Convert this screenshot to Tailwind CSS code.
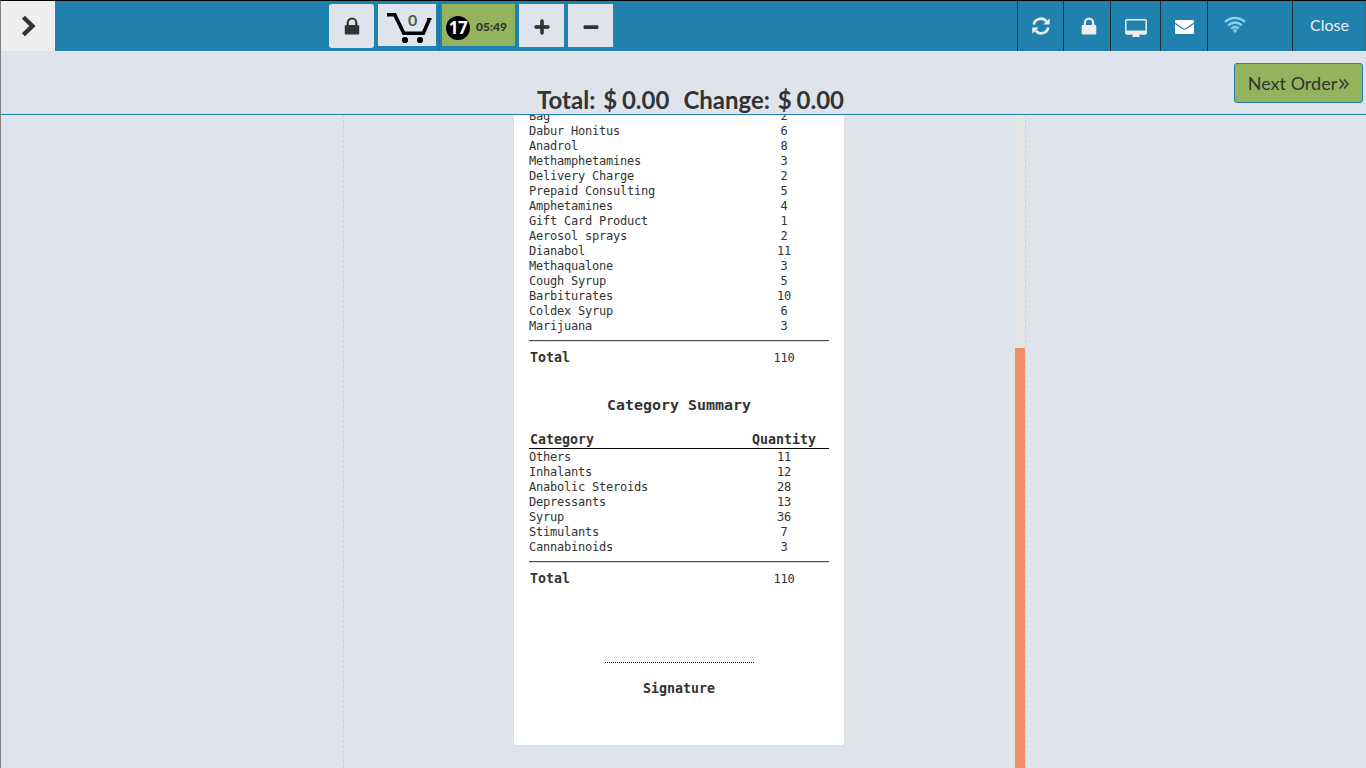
<!DOCTYPE html>
<html lang="en">
<head>
<meta charset="utf-8">
<title>Point of Sale</title>
<script src="https://cdn.jsdelivr.net/npm/@tailwindcss/browser@4"></script>
</head>
<body class="w-[1366px] h-[768px] overflow-hidden bg-[#dfe4ec] font-['Lato',sans-serif] text-[#333]">
<div class="flex flex-col w-full h-full border-t border-t-black border-l border-l-[#808080]">
  <header class="flex shrink-0 h-[50px] bg-[#2080ae]">
    <button class="w-[54px] h-[50px] bg-[#eee] flex items-center justify-center">
      <svg class="w-[16px] h-[24px] ml-[1px]" viewBox="0 0 16 24" fill="none" stroke="#333" stroke-width="4.4"><path d="M2.4 3.2 11.4 12 2.4 20.8"/></svg>
    </button>
    <div class="flex items-start pt-[3px] ml-[274px]">
      <button class="w-[45px] h-[44px] rounded-[3px] bg-[#dfe4ec] flex items-center justify-center">
        <svg class="w-[16px] h-[18px] ml-[1px]" viewBox="0 0 16 18"><path d="M3.7 9V5.8a4.3 4.3 0 0 1 8.6 0V9" fill="none" stroke="#333" stroke-width="2.1"/><rect x=".8" y="8" width="14.4" height="9.6" rx="1" fill="#333"/></svg>
      </button>
      <button class="relative ml-[4px] w-[58px] h-[42px] bg-[#dfe4ec]">
        <svg class="w-[58px] h-[42px]" viewBox="0 0 58 42"><path d="M9 10.7H16.8L25.8 29.3H45.3L51.2 15.8" fill="none" stroke="#000" stroke-width="3.6"/><path d="M49 15H53.5" stroke="#000" stroke-width="2"/><circle cx="27" cy="36" r="3.1"/><circle cx="42" cy="36" r="3.1"/></svg>
        <span class="absolute left-[30px] top-[6px] text-[16px] leading-[20px] font-bold text-[#555]">0</span>
      </button>
      <div class="ml-[3px] -mt-[3px] h-[50px] w-px bg-[#43667d]"></div>
      <button class="ml-[2px] w-[73px] h-[42px] bg-[#93b45c] flex items-center">
        <span class="ml-[4px] mt-[6px] w-[24px] h-[24px] rounded-full bg-black text-white text-[17px] leading-[24px] font-bold font-['Open_Sans',sans-serif] text-center tracking-[-0.5px]">17</span>
        <span class="ml-[6px] mt-[4px] text-[12px] font-black">05:49</span>
      </button>
      <button class="ml-[4px] w-[45px] h-[43px] bg-[#dfe4ec] flex items-center justify-center">
        <svg class="w-[16px] h-[16px] mt-[2px] ml-[1px]" viewBox="0 0 16 16"><path d="M8 1.6V14.4M1.6 8H14.4" stroke="#333" stroke-width="3.4" stroke-linejoin="round"/><path d="M8 1.6V14.4M1.6 8H14.4" stroke="#333" stroke-width="2.8" stroke-linecap="round"/></svg>
      </button>
      <button class="ml-[4px] w-[45px] h-[43px] bg-[#dfe4ec] flex items-center justify-center">
        <svg class="w-[16px] h-[16px] mt-[2px] ml-[1px]" viewBox="0 0 16 16"><rect x=".6" y="6.2" width="14.8" height="3.8" rx="1" fill="#333"/></svg>
      </button>
    </div>
    <nav class="ml-auto flex text-[#eee]">
      <a class="w-[46px] border-l border-[#262e38] flex items-center justify-center">
        <svg class="w-[18px] h-[18px]" viewBox="0 0 18 18"><path d="M1.8 7.4A7 7 0 0 1 14.2 4.4M16.2 10.6A7 7 0 0 1 3.8 13.6" fill="none" stroke="#eee" stroke-width="2.6"/><path d="M17.7 1.2V7.6H11.3ZM.3 16.8V10.4H6.7Z" fill="#eee"/></svg>
      </a>
      <a class="w-[47px] border-l border-[#262e38] flex items-center justify-center">
        <svg class="w-[16px] h-[18px] ml-[4px]" viewBox="0 0 16 18"><path d="M3.9 9V5.8a4.1 4.1 0 0 1 8.2 0V9" fill="none" stroke="#eee" stroke-width="2.2"/><rect x=".7" y="8" width="14.6" height="9.6" rx="1" fill="#eee"/></svg>
      </a>
      <a class="w-[50px] border-l border-[#262e38] flex items-center justify-center">
        <svg class="w-[22px] h-[20px] mt-[4px]" viewBox="0 0 22 20"><rect x=".8" y="1.7" width="20.4" height="14.3" rx="1" fill="none" stroke="#eee" stroke-width="1.5"/><path d="M.8 12.4H21.2V16H.8ZM8 15H14V18H15V19H7V18H8Z" fill="#eee"/></svg>
      </a>
      <a class="w-[47px] border-l border-[#262e38] flex items-center justify-center">
        <svg class="w-[19px] h-[14px] mt-[2px]" viewBox="0 0 19 14"><rect width="19" height="14" rx="1" fill="#fff"/><path d="M0 3.2 7.6 8.6Q9.5 9.9 11.4 8.6L19 3.2" fill="none" stroke="#2080ae" stroke-width="1.2"/></svg>
      </a>
      <a class="w-[85px] border-l border-[#262e38]">
        <svg class="w-[22px] h-[17px] ml-[16px] mt-[15px]" viewBox="0 0 22 17" fill="none" stroke="#87ceeb" stroke-width="2.6"><path d="M1 6A14.5 14.5 0 0 1 21 6M4.2 9.4A9.8 9.8 0 0 1 17.8 9.4M7.4 12.6A5.2 5.2 0 0 1 14.6 12.6"/><path d="M11 12.8 13.2 14.8 11 17 8.8 14.8Z" fill="#87ceeb" stroke="none"/></svg>
      </a>
      <a class="w-[74px] border-l border-r border-l-[#262e38] border-r-[#43667d] pl-[1px] text-center text-[16px] leading-[48px] text-[#eee]">Close</a>
    </nav>
  </header>
  <section class="relative shrink-0 h-[64px] border-b border-[#2080ae]">
    <div class="flex gap-[15px] pl-[536px] pt-[34px] text-[24px] leading-[30px] font-bold whitespace-nowrap"><span>Total:<span class="pl-[2px]"> $</span><span class="-ml-[1px]"> 0.00</span></span><span class="-ml-px">Change:<span class="pl-[2px]"> $</span><span class="-ml-[1px]"> 0.00</span></span></div>
    <button class="absolute right-[3px] top-[12px] w-[129px] h-[40px] rounded-[3px] border border-[#2080ae] bg-[#93b45c] text-[18px] flex items-center justify-center whitespace-nowrap">Next Order
      <svg class="ml-[2px] mt-px w-[10px] h-[10px]" viewBox="0 0 10 10" fill="none" stroke="#333" stroke-width="1.5"><path d="M.7.6 4.7 5 .7 9.4M5 .6 9 5 5 9.4"/></svg>
    </button>
  </section>
  <main class="flex flex-1 min-h-0 overflow-hidden">
    <div class="w-[343px] border-r border-dashed border-[#cfd3d8]"></div>
    <div class="flex-1 flex justify-end">
      <div class="mr-[170px] w-[332px] h-[638px] -mt-[7px] px-[15px] bg-white border border-t-0 border-[#ddd] rounded-[3px] font-['DejaVu_Sans_Mono',monospace] text-[12px] tracking-[-0.224px] leading-[15px]">
        <div id="products" class="pt-px"></div>
        <div class="mt-[6px] h-px bg-[#4d4d4d]"></div>
        <div class="h-px bg-[#ddd]"></div>
        <div class="mt-[8px] flex"><b class="flex-1 pl-px text-[13.29px] tracking-normal">Total</b><span class="w-[90px] pt-px -mb-px text-center">110</span></div>
        <h2 class="mt-[33px] text-center text-[14.95px] font-bold tracking-normal">Category Summary</h2>
        <div class="mt-[19px] flex h-[17px] text-[13.29px] font-bold tracking-normal border-b border-black"><span class="flex-1 pl-px">Category</span><span class="w-[90px] text-center">Quantity</span></div>
        <div id="categories" class="pt-px"></div>
        <div class="mt-[6px] h-px bg-[#4d4d4d]"></div>
        <div class="h-px bg-[#ddd]"></div>
        <div class="mt-[8px] flex"><b class="flex-1 pl-px text-[13.29px] tracking-normal">Total</b><span class="w-[90px] pt-px -mb-px text-center">110</span></div>
        <div class="mt-[76px] mx-auto w-[149px] h-px bg-[repeating-linear-gradient(90deg,#000_0_1px,#fff_1px_2px)]"></div>
        <div class="mt-[18px] text-center text-[13.29px] font-bold tracking-normal">Signature</div>
      </div>
      <div class="w-[10px] bg-[#e6e6e6] pt-[233px]"><div class="h-full bg-[#f08e66]"></div></div>
    </div>
    <div class="w-[341px] border-l border-dashed border-[#cfd3d8]"></div>
  </main>
</div>
<script>
const fill = (id, rows) => {
  document.getElementById(id).innerHTML = rows.map(([n, q]) =>
    `<div class="flex h-[15px]"><span class="flex-1">${n}</span><span class="w-[90px] text-center">${q}</span></div>`).join('');
};
fill('products', [['Bag',2],['Dabur Honitus',6],['Anadrol',8],['Methamphetamines',3],['Delivery Charge',2],['Prepaid Consulting',5],['Amphetamines',4],['Gift Card Product',1],['Aerosol sprays',2],['Dianabol',11],['Methaqualone',3],['Cough Syrup',5],['Barbiturates',10],['Coldex Syrup',6],['Marijuana',3]]);
fill('categories', [['Others',11],['Inhalants',12],['Anabolic Steroids',28],['Depressants',13],['Syrup',36],['Stimulants',7],['Cannabinoids',3]]);
</script>
</body>
</html>
